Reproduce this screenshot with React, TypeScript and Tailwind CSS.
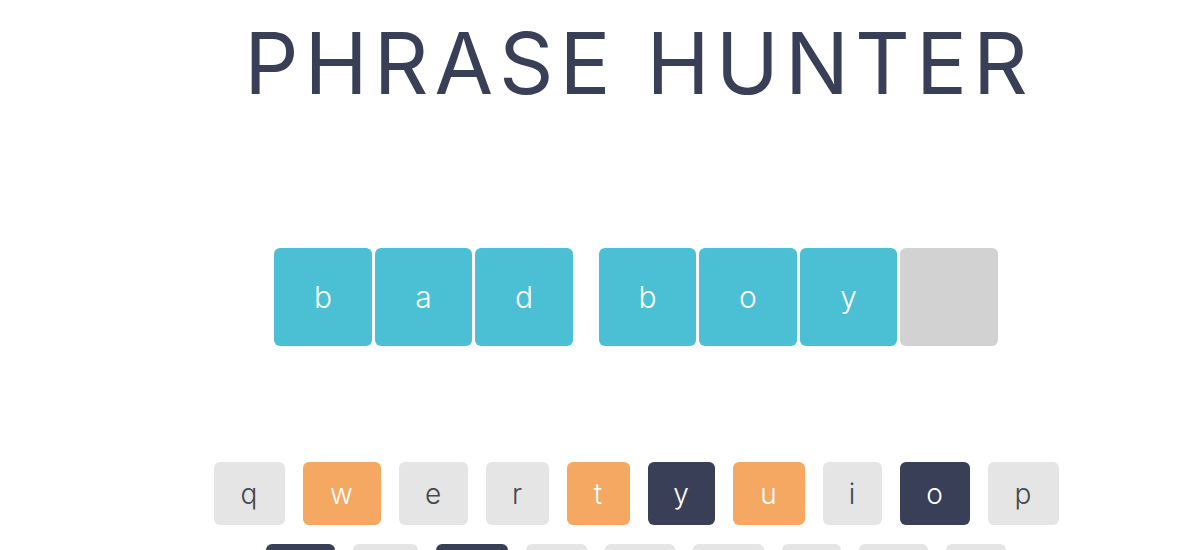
import React from "react";

type Tile = { ch: string; shown: boolean } | null;

const phrase: Tile[] = [
  { ch: "b", shown: true },
  { ch: "a", shown: true },
  { ch: "d", shown: true },
  null,
  { ch: "b", shown: true },
  { ch: "o", shown: true },
  { ch: "y", shown: true },
  { ch: "s", shown: false },
];

type KeyState = "idle" | "wrong" | "chosen";

const rows: { ch: string; w: string; state: KeyState }[][] = [
  [
    { ch: "q", w: "w-[71px]", state: "idle" },
    { ch: "w", w: "w-[78px]", state: "wrong" },
    { ch: "e", w: "w-[69px]", state: "idle" },
    { ch: "r", w: "w-[63px]", state: "idle" },
    { ch: "t", w: "w-[63px]", state: "wrong" },
    { ch: "y", w: "w-[67px]", state: "chosen" },
    { ch: "u", w: "w-[72px]", state: "wrong" },
    { ch: "i", w: "w-[59px]", state: "idle" },
    { ch: "o", w: "w-[70px]", state: "chosen" },
    { ch: "p", w: "w-[71px]", state: "idle" },
  ],
  [
    { ch: "a", w: "w-[69px]", state: "chosen" },
    { ch: "s", w: "w-[65px]", state: "idle" },
    { ch: "d", w: "w-[72px]", state: "chosen" },
    { ch: "f", w: "w-[61px]", state: "idle" },
    { ch: "g", w: "w-[70px]", state: "idle" },
    { ch: "h", w: "w-[71px]", state: "idle" },
    { ch: "j", w: "w-[59px]", state: "idle" },
    { ch: "k", w: "w-[69px]", state: "idle" },
    { ch: "l", w: "w-[60px]", state: "idle" },
  ],
];

const keyColors: Record<KeyState, string> = {
  idle: "bg-[#e5e5e5] text-[#44474f]",
  wrong: "bg-[#f5a862] text-white",
  chosen: "bg-[#3a3f58] text-white",
};

export default function App() {
  return (
    <div className="h-[550px] w-[1200px] overflow-hidden bg-white pl-[72px] font-['Inter',sans-serif]">
      <div className="flex flex-col items-center">
        <h1 className="mt-[14px] pl-[6px] text-[85px] leading-[100px] font-normal tracking-[6px] text-[#3a3f58]">
          PHRASE HUNTER
        </h1>

        <div className="mt-[134px] flex gap-[3px]">
          {phrase.map((t, i) =>
            t === null ? (
              <div key={i} className="w-[20px]" />
            ) : (
              <div
                key={i}
                className={`flex h-[98px] w-[97.5px] items-center justify-center rounded-[6px] text-[30px] font-light ${
                  t.shown ? "bg-[#4bbfd4] text-white" : "bg-[#d2d2d2] text-transparent"
                }`}
              >
                {t.ch}
              </div>
            )
          )}
        </div>

        <div className="mt-[116px] flex flex-col items-center gap-[19px]">
          {rows.map((row, r) => (
            <div key={r} className="flex gap-[18px]">
              {row.map((k) => (
                <button
                  key={k.ch}
                  className={`flex h-[63px] ${k.w} items-center justify-center rounded-[6px] text-[28px] font-light ${keyColors[k.state]}`}
                >
                  {k.ch}
                </button>
              ))}
            </div>
          ))}
        </div>
      </div>
    </div>
  );
}
